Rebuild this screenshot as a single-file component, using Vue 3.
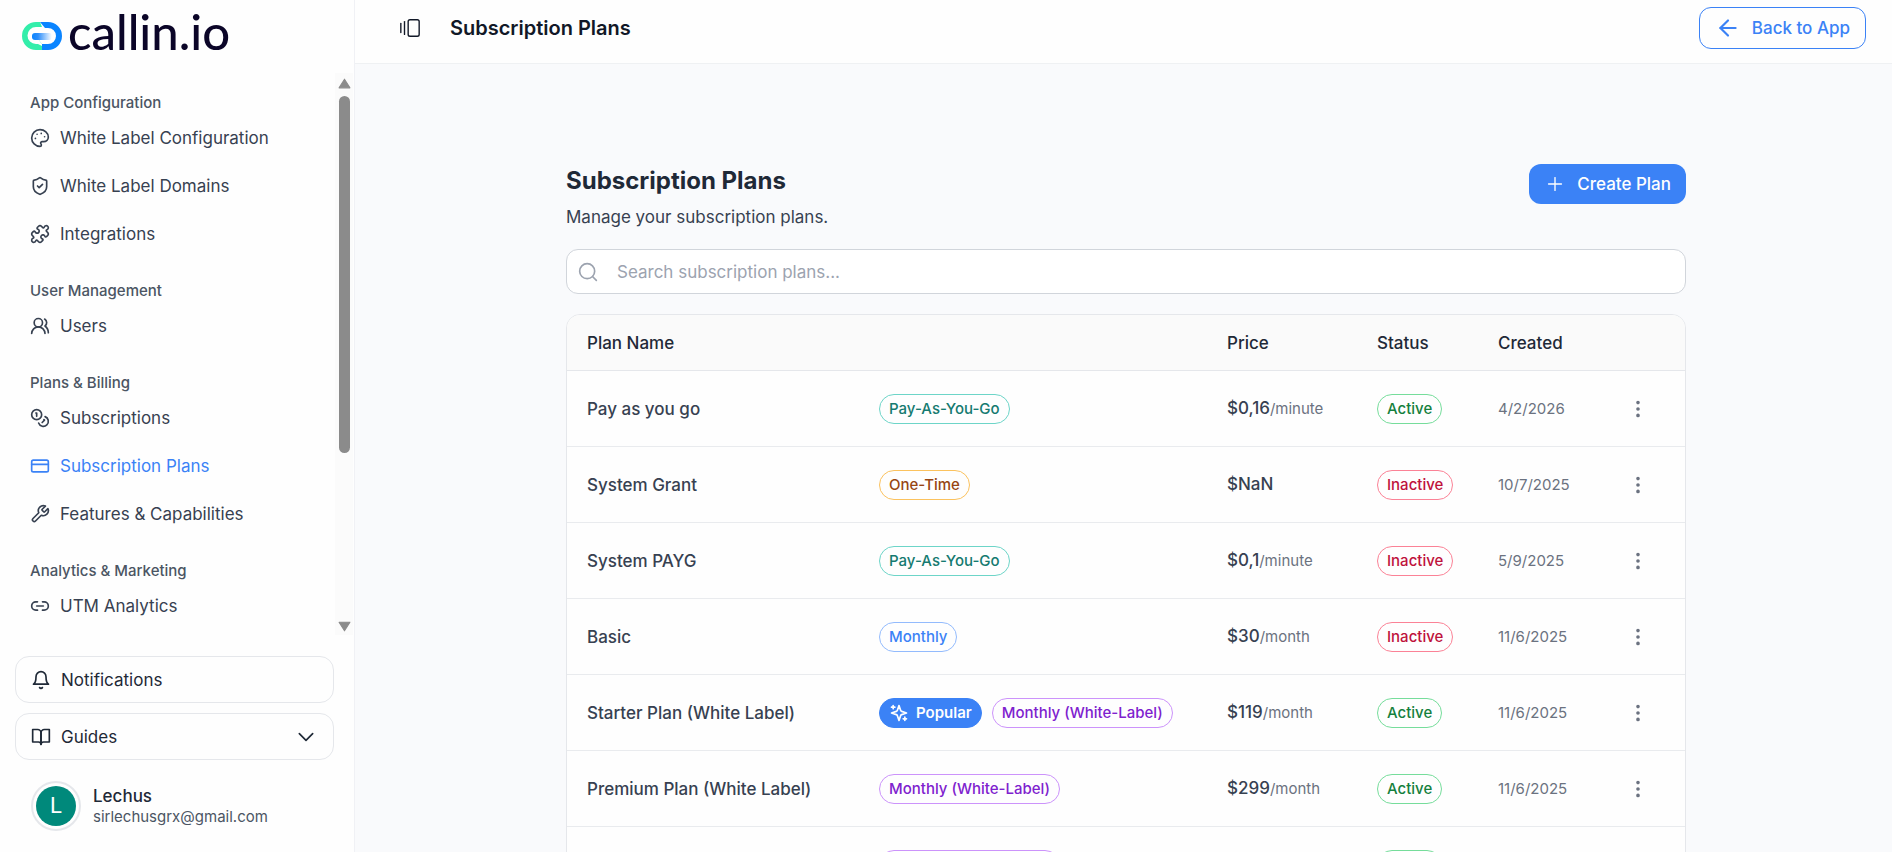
<script setup>
import { ref, computed } from "vue";

const navGroups = [
  {
    title: "App Configuration",
    items: [
      { label: "White Label Configuration", icon: "palette" },
      { label: "White Label Domains", icon: "shield" },
      { label: "Integrations", icon: "puzzle" },
    ],
  },
  {
    title: "User Management",
    items: [{ label: "Users", icon: "users" }],
  },
  {
    title: "Plans & Billing",
    items: [
      { label: "Subscriptions", icon: "coins" },
      { label: "Subscription Plans", icon: "card" },
      { label: "Features & Capabilities", icon: "wrench" },
    ],
  },
  {
    title: "Analytics & Marketing",
    items: [{ label: "UTM Analytics", icon: "link" }],
  },
];

// 24x24 outline icons, one string per path
const icons = {
  palette: [
    "M12 2C6.5 2 2 6.5 2 12s4.5 10 10 10c.926 0 1.648-.746 1.648-1.688 0-.437-.18-.835-.437-1.125-.29-.289-.438-.652-.438-1.125a1.64 1.64 0 0 1 1.668-1.668h1.996c3.051 0 5.555-2.503 5.555-5.554C21.965 6.012 17.461 2 12 2z",
    "M13.5 6.5h.01",
    "M17.5 10.5h.01",
    "M8.5 7.5h.01",
    "M6.5 12.5h.01",
  ],
  shield: [
    "M20 13c0 5-3.5 7.5-7.66 8.95a1 1 0 0 1-.67-.01C7.5 20.5 4 18 4 13V6a1 1 0 0 1 1-1c2 0 4.5-1.2 6.24-2.72a1.17 1.17 0 0 1 1.52 0C14.51 3.81 17 5 19 5a1 1 0 0 1 1 1z",
    "m9 12 2 2 4-4",
  ],
  puzzle: [
    "M19.439 7.85c-.049.322.059.648.289.878l1.568 1.568c.47.47.706 1.087.706 1.704s-.235 1.233-.706 1.704l-1.611 1.611a.98.98 0 0 1-.837.276c-.47-.07-.802-.48-.968-.925a2.501 2.501 0 1 0-3.214 3.214c.446.166.855.497.925.968a.979.979 0 0 1-.276.837l-1.61 1.61a2.404 2.404 0 0 1-1.705.707 2.402 2.402 0 0 1-1.704-.706l-1.568-1.568a1.026 1.026 0 0 0-.877-.29c-.493.074-.84.504-1.02.968a2.5 2.5 0 1 1-3.237-3.237c.464-.18.894-.527.967-1.02a1.026 1.026 0 0 0-.289-.877l-1.568-1.568A2.402 2.402 0 0 1 1.998 12c0-.617.236-1.234.706-1.704L4.23 8.77c.24-.24.581-.353.917-.303.515.077.877.528 1.073 1.01a2.5 2.5 0 1 0 3.259-3.259c-.482-.196-.933-.558-1.01-1.073-.05-.336.062-.676.303-.917l1.525-1.525A2.402 2.402 0 0 1 12 1.998c.617 0 1.234.236 1.704.706l1.568 1.568c.23.23.556.338.877.29.493-.074.84-.504 1.02-.968a2.5 2.5 0 1 1 3.237 3.237c-.464.18-.894.527-.967 1.02Z",
  ],
  users: [
    "M18 21a8 8 0 0 0-16 0",
    "M15 8a5 5 0 1 1-10 0a5 5 0 1 1 10 0",
    "M22 20c0-3.37-2-6.5-4-8a5 5 0 0 0-.45-8.3",
  ],
  coins: [
    "M14 8a6 6 0 1 1-12 0a6 6 0 1 1 12 0",
    "M18.09 10.37A6 6 0 1 1 10.34 18",
    "M7 6h1v4",
    "m16.71 13.88.7.71-2.82 2.82",
  ],
  card: [
    "M4 5h16a2 2 0 0 1 2 2v10a2 2 0 0 1-2 2H4a2 2 0 0 1-2-2V7a2 2 0 0 1 2-2z",
    "M2 10h20",
  ],
  wrench: [
    "M14.7 6.3a1 1 0 0 0 0 1.4l1.6 1.6a1 1 0 0 0 1.4 0l3.77-3.77a6 6 0 0 1-7.94 7.94l-6.91 6.91a2.12 2.12 0 0 1-3-3l6.91-6.91a6 6 0 0 1 7.94-7.94l-3.76 3.76z",
  ],
  link: [
    "M9 17H7A5 5 0 0 1 7 7h2",
    "M15 7h2a5 5 0 1 1 0 10h-2",
    "M8 12h8",
  ],
};

const plans = [
  {
    name: "Pay as you go",
    type: "Pay-As-You-Go",
    tone: "teal",
    price: "$0,16",
    unit: "/minute",
    status: "Active",
    created: "4/2/2026",
  },
  {
    name: "System Grant",
    type: "One-Time",
    tone: "amber",
    price: "$NaN",
    unit: "",
    status: "Inactive",
    created: "10/7/2025",
  },
  {
    name: "System PAYG",
    type: "Pay-As-You-Go",
    tone: "teal",
    price: "$0,1",
    unit: "/minute",
    status: "Inactive",
    created: "5/9/2025",
  },
  {
    name: "Basic",
    type: "Monthly",
    tone: "blue",
    price: "$30",
    unit: "/month",
    status: "Inactive",
    created: "11/6/2025",
  },
  {
    name: "Starter Plan (White Label)",
    type: "Monthly (White-Label)",
    tone: "purple",
    popular: true,
    price: "$119",
    unit: "/month",
    status: "Active",
    created: "11/6/2025",
  },
  {
    name: "Premium Plan (White Label)",
    type: "Monthly (White-Label)",
    tone: "purple",
    price: "$299",
    unit: "/month",
    status: "Active",
    created: "11/6/2025",
  },
  {
    name: "Business Plan (White Label)",
    type: "Monthly (White-Label)",
    tone: "purple",
    price: "$499",
    unit: "/month",
    status: "Active",
    created: "11/6/2025",
  },
];

const activeItem = ref("Subscription Plans");
const search = ref("");

const filteredPlans = computed(() => {
  const term = search.value.trim().toLowerCase();
  return plans.filter((plan) => plan.name.toLowerCase().includes(term));
});
</script>

<template>
  <div class="layout">
    <aside class="sidebar">
      <a href="#" class="logo">
        <svg class="logo__mark" viewBox="0 0 41 30" aria-hidden="true">
          <defs>
            <linearGradient id="logo-bar" x1="0" x2="1" y1="0" y2="0">
              <stop offset="0" stop-color="#0a84ff" />
              <stop offset="0.3" stop-color="#2b8dfa" />
              <stop offset="1" stop-color="#ffffff" />
            </linearGradient>
          </defs>
          <path
            fill="#33eeaa"
            d="M19 1h-4a14 14 0 0 0 0 28h6v-6l-4-5v5h-2a8 8 0 0 1 0-17h6z"
          />
          <path
            fill="#0a84ff"
            d="M19 1h8a14 14 0 0 1 0 28h-6v-6h6a8 8 0 0 0 0-16h-3z"
          />
          <path fill="#fefefe" d="M17 18l4 5v2l-4-2z" />
          <rect x="11" y="12" width="20" height="7" rx="3" fill="url(#logo-bar)" />
        </svg>
        <span class="logo__text">callin.io</span>
      </a>

      <div class="sidebar__scroll">
        <nav class="nav">
          <section v-for="group in navGroups" :key="group.title" class="nav__group">
            <h2 class="nav__title">{{ group.title }}</h2>
            <a
              v-for="item in group.items"
              :key="item.label"
              href="#"
              class="nav__item"
              :class="{ 'nav__item--active': item.label === activeItem }"
              @click.prevent="activeItem = item.label"
            >
              <svg class="icon" viewBox="0 0 24 24" aria-hidden="true">
                <path v-for="d in icons[item.icon]" :key="d" :d="d" />
              </svg>
              {{ item.label }}
            </a>
          </section>
        </nav>
        <div class="scrollbar" aria-hidden="true">
          <svg class="scrollbar__arrow" viewBox="0 0 12 10">
            <path d="M6 1 11 9H1z" />
          </svg>
          <div class="scrollbar__track">
            <div class="scrollbar__thumb"></div>
          </div>
          <svg class="scrollbar__arrow" viewBox="0 0 12 10">
            <path d="M6 9 11 1H1z" />
          </svg>
        </div>
      </div>

      <div class="sidebar__footer">
        <button type="button" class="side-button">
          <svg class="icon" viewBox="0 0 24 24" aria-hidden="true">
            <path d="M6 8a6 6 0 0 1 12 0c0 7 3 9 3 9H3s3-2 3-9" />
            <path d="M10.3 21a1.94 1.94 0 0 0 3.4 0" />
          </svg>
          Notifications
        </button>
        <button type="button" class="side-button">
          <svg class="icon" viewBox="0 0 24 24" aria-hidden="true">
            <path d="M2 3h6a4 4 0 0 1 4 4v14a3 3 0 0 0-3-3H2z" />
            <path d="M22 3h-6a4 4 0 0 0-4 4v14a3 3 0 0 1 3-3h7z" />
          </svg>
          Guides
          <svg class="icon side-button__chevron" viewBox="0 0 24 24" aria-hidden="true">
            <path d="m4 8 8 8 8-8" />
          </svg>
        </button>
        <div class="user">
          <div class="user__ring">
            <div class="user__avatar">L</div>
          </div>
          <div>
            <div class="user__name">Lechus</div>
            <div class="user__email">sirlechusgrx@gmail.com</div>
          </div>
        </div>
      </div>
    </aside>

    <div class="page">
      <header class="topbar">
        <button type="button" class="topbar__toggle" aria-label="Toggle sidebar">
          <svg class="icon" viewBox="0 0 24 24" aria-hidden="true">
            <path d="M2 7v10" />
            <path d="M6 5v14" />
            <rect width="12" height="18" x="10" y="3" rx="2" />
          </svg>
        </button>
        <div class="topbar__title">Subscription Plans</div>
        <a href="#" class="back-link">
          <svg class="icon" viewBox="0 0 24 24" aria-hidden="true">
            <path d="m12 19-7-7 7-7" />
            <path d="M19 12H5" />
          </svg>
          Back to App
        </a>
      </header>

      <main class="main">
        <div class="content">
          <div class="heading">
            <div>
              <h1 class="heading__title">Subscription Plans</h1>
              <p class="heading__text">Manage your subscription plans.</p>
            </div>
            <button type="button" class="create-button">
              <svg class="icon" viewBox="0 0 24 24" aria-hidden="true">
                <path d="M5 12h14" />
                <path d="M12 5v14" />
              </svg>
              Create Plan
            </button>
          </div>

          <label class="search">
            <svg class="icon" viewBox="0 0 24 24" aria-hidden="true">
              <circle cx="11" cy="11" r="9" />
              <path d="m22 22-4.3-4.3" />
            </svg>
            <input
              v-model="search"
              type="text"
              class="search__input"
              aria-label="Search subscription plans"
              placeholder="Search subscription plans..."
            />
          </label>

          <div class="table-card">
            <table class="plans">
              <colgroup>
                <col class="plans__col-name" />
                <col />
                <col class="plans__col-price" />
                <col class="plans__col-status" />
                <col class="plans__col-created" />
                <col class="plans__col-actions" />
              </colgroup>
              <thead>
                <tr>
                  <th>Plan Name</th>
                  <th></th>
                  <th>Price</th>
                  <th>Status</th>
                  <th>Created</th>
                  <th></th>
                </tr>
              </thead>
              <tbody>
                <tr v-for="plan in filteredPlans" :key="plan.name">
                  <td class="plans__name">{{ plan.name }}</td>
                  <td>
                    <div class="badges">
                      <span v-if="plan.popular" class="badge badge--popular">
                        <svg class="icon" viewBox="0 0 24 24" aria-hidden="true">
                          <path
                            d="m12 3-1.912 5.813a2 2 0 0 1-1.275 1.275L3 12l5.813 1.912a2 2 0 0 1 1.275 1.275L12 21l1.912-5.813a2 2 0 0 1 1.275-1.275L21 12l-5.813-1.912a2 2 0 0 1-1.275-1.275L12 3Z"
                          />
                          <path d="M5 3v4" />
                          <path d="M19 17v4" />
                          <path d="M3 5h4" />
                          <path d="M17 19h4" />
                        </svg>
                        Popular
                      </span>
                      <span class="badge" :class="`badge--${plan.tone}`">{{ plan.type }}</span>
                    </div>
                  </td>
                  <td class="plans__price">
                    {{ plan.price }}<span class="plans__unit">{{ plan.unit }}</span>
                  </td>
                  <td>
                    <div class="badges">
                      <span
                        class="badge"
                        :class="plan.status === 'Active' ? 'badge--green' : 'badge--rose'"
                        >{{ plan.status }}</span
                      >
                    </div>
                  </td>
                  <td class="plans__created">{{ plan.created }}</td>
                  <td class="plans__actions">
                    <button
                      type="button"
                      class="menu-button"
                      :aria-label="`Actions for ${plan.name}`"
                    >
                      <svg class="icon" viewBox="0 0 24 24" aria-hidden="true">
                        <circle cx="12" cy="12" r="1" />
                        <circle cx="12" cy="5" r="1" />
                        <circle cx="12" cy="19" r="1" />
                      </svg>
                    </button>
                  </td>
                </tr>
              </tbody>
            </table>
          </div>
        </div>
      </main>
    </div>
  </div>
</template>

<style>
body {
  margin: 0;
  overflow: hidden;
}
</style>

<style scoped>
.layout {
  display: flex;
  height: 100vh;
  overflow: hidden;
  background: #f9fafc;
  color: #374151;
  font-family: Inter, "Liberation Sans", sans-serif;
  font-size: 17px;
  line-height: 28px;
}

.layout *,
.layout *::before {
  box-sizing: border-box;
}

a {
  color: inherit;
  text-decoration: none;
}

button {
  font: inherit;
  color: inherit;
  cursor: pointer;
}

.icon {
  flex: none;
  width: 20px;
  height: 20px;
  fill: none;
  stroke: currentColor;
  stroke-width: 2;
  stroke-linecap: round;
  stroke-linejoin: round;
}

/* Sidebar */
.sidebar {
  display: flex;
  flex: none;
  flex-direction: column;
  width: 355px;
  background: #fefefe;
  border-right: 1px solid #f0f1f5;
}

.logo {
  display: flex;
  align-items: center;
  gap: 6px;
  height: 73px;
  padding: 0 21px 12px;
}

.logo__mark {
  width: 41px;
  height: 30px;
  margin-top: 10px;
}

.logo__text {
  color: #0b0528;
  font-family: Lato, "Liberation Sans", sans-serif;
  font-size: 49px;
  font-weight: 500;
  line-height: 60px;
}

.sidebar__scroll {
  display: flex;
  flex: 1;
  min-height: 0;
}

.nav {
  flex: 1;
  min-width: 0;
  overflow: hidden;
  padding-top: 20px;
}

.nav__group {
  padding: 0 12px 21px 30px;
}

.nav__title {
  margin: 0 0 3px;
  color: #4b5563;
  font-size: 15px;
  font-weight: 500;
  line-height: 20px;
}

.nav__item {
  display: flex;
  align-items: center;
  gap: 10px;
  height: 44px;
  margin-bottom: 4px;
}

.nav__item--active {
  color: #3b82f6;
}

.scrollbar {
  display: flex;
  flex-direction: column;
  align-items: center;
  gap: 7px;
  width: 18px;
  margin-right: 1px;
  padding: 5px 0 3px;
  background: #fbfbfb;
}

.scrollbar__arrow {
  width: 13px;
  height: 11px;
  fill: #8b8b8b;
  stroke: #8b8b8b;
  stroke-linejoin: round;
}

.scrollbar__track {
  flex: 1;
  width: 11px;
}

.scrollbar__thumb {
  height: 69%;
  border-radius: 6px;
  background: #8b8b8b;
}

.sidebar__footer {
  display: flex;
  flex-direction: column;
  gap: 10px;
  padding: 21px 20px 21px 15px;
}

.side-button {
  display: flex;
  align-items: center;
  gap: 10px;
  height: 47px;
  padding: 0 17px 0 15px;
  border: 1px solid #e5e7eb;
  border-radius: 14px;
  background: #fefefe;
  color: #1f2937;
}

.side-button__chevron {
  margin-left: auto;
}

.user {
  display: flex;
  align-items: center;
  gap: 12px;
  padding: 11px 0 0 16px;
}

.user__ring {
  padding: 3px;
  border: 2px solid #e5e7eb;
  border-radius: 50%;
}

.user__avatar {
  width: 40px;
  height: 40px;
  border-radius: 50%;
  background: #00897b;
  color: #fefefe;
  font-family: Roboto, sans-serif;
  font-size: 22px;
  line-height: 40px;
  text-align: center;
}

.user__name {
  color: #1f2937;
  font-weight: 500;
  line-height: 22px;
}

.user__email {
  color: #4b5563;
  font-size: 15px;
  line-height: 20px;
}

/* Top bar */
.page {
  display: flex;
  flex: 1;
  flex-direction: column;
  min-width: 0;
}

.topbar {
  display: flex;
  flex: none;
  align-items: center;
  height: 64px;
  padding: 0 26px 8px 44px;
  border-bottom: 1px solid #eff1f3;
  background: #fefefe;
}

.topbar__toggle {
  display: flex;
  padding: 0;
  border: 0;
  background: none;
  color: #111827;
}

.topbar__toggle .icon {
  width: 22px;
  height: 22px;
  stroke-width: 1.5;
}

.topbar__title {
  margin-left: 29px;
  color: #111827;
  font-size: 20px;
  font-weight: 600;
}

.back-link {
  display: flex;
  align-items: center;
  gap: 11px;
  height: 42px;
  margin-left: auto;
  padding: 0 15px;
  border: 1px solid #3b82f6;
  border-radius: 12px;
  color: #3b82f6;
  font-weight: 500;
}

.back-link .icon {
  width: 26px;
  height: 26px;
}

/* Content */
.main {
  flex: 1;
  min-height: 0;
  overflow: hidden;
  padding: 100px 22px 0 27px;
}

.content {
  max-width: 1120px;
  margin: 0 auto;
}

.heading {
  display: flex;
  align-items: flex-start;
  justify-content: space-between;
  margin-bottom: 18px;
}

.heading__title {
  margin: 0 0 5px;
  color: #1f2937;
  font-size: 24px;
  font-weight: 700;
  line-height: 34px;
}

.heading__text {
  margin: 0;
}

.create-button {
  display: flex;
  align-items: center;
  gap: 11px;
  height: 40px;
  padding: 0 15px;
  border: 0;
  border-radius: 12px;
  background: #3b82f6;
  color: #fefefe;
  font-weight: 500;
}

.create-button .icon {
  width: 22px;
  height: 22px;
  stroke-width: 1.5;
}

.search {
  display: flex;
  align-items: center;
  gap: 19px;
  height: 45px;
  margin-bottom: 20px;
  padding: 0 11px;
  border: 1px solid #d1d5db;
  border-radius: 12px;
  background: #fff;
  color: #9ca3af;
}

.search__input {
  flex: 1;
  min-width: 0;
  padding: 0;
  border: 0;
  outline: 0;
  background: none;
  color: #1f2937;
  font: inherit;
}

.search__input::placeholder {
  color: #9ca3af;
  opacity: 1;
}

.table-card {
  overflow: hidden;
  border: 1px solid #e5e7eb;
  border-radius: 14px;
  background: #fefefe;
}

.plans {
  width: 100%;
  border-collapse: separate;
  border-spacing: 0;
  table-layout: fixed;
}

.plans__col-name {
  width: 292px;
}

.plans__col-price {
  width: 150px;
}

.plans__col-status {
  width: 121px;
}

.plans__col-created {
  width: 112px;
}

.plans__col-actions {
  width: 95px;
}

.plans th {
  height: 56px;
  padding: 0 0 0 20px;
  border-bottom: 1px solid #e5e7eb;
  background: #fafafa;
  color: #1f2937;
  font-weight: 500;
  text-align: left;
}

.plans td {
  height: 76px;
  padding: 0 0 0 20px;
  border-bottom: 1px solid #e9ebee;
  white-space: nowrap;
}

.plans__name,
.plans__price {
  font-weight: 500;
}

.plans__unit {
  color: #6b7280;
  font-size: 15px;
  font-weight: 400;
}

.plans__created {
  color: #6b7280;
  font-size: 15px;
}

.plans td.plans__actions {
  padding: 0;
}

.menu-button {
  display: flex;
  margin: 0 auto;
  padding: 4px;
  border: 0;
  background: none;
  color: #6b7280;
}

.menu-button .icon {
  width: 22px;
  height: 22px;
}

.badges {
  display: flex;
  gap: 10px;
}

.badge {
  display: flex;
  align-items: center;
  gap: 7px;
  height: 30px;
  padding: 0 9px;
  border: 1px solid;
  border-radius: 15px;
  font-size: 15px;
  font-weight: 500;
}

.badge--teal {
  border-color: #6dd5c8;
  color: #157a70;
}

.badge--amber {
  border-color: #fbc25e;
  color: #974513;
}

.badge--blue {
  border-color: #93bbfd;
  color: #3b82f6;
}

.badge--purple {
  border-color: #cc93fb;
  color: #7e22ce;
}

.badge--green {
  border-color: #76dd9b;
  color: #15803d;
}

.badge--rose {
  border-color: #fb8296;
  color: #be123c;
}

.badge--popular {
  border-color: #3b82f6;
  background: #3b82f6;
  color: #fefefe;
  font-weight: 600;
}
</style>
